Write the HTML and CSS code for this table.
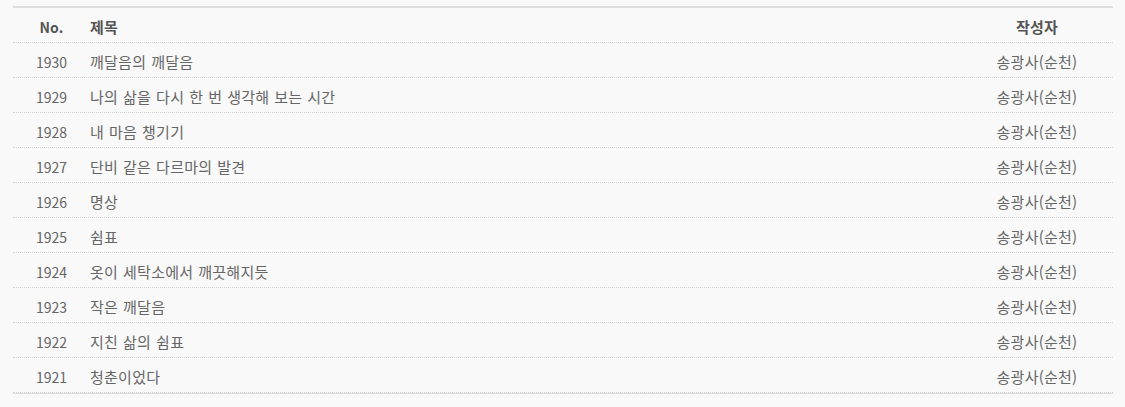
FILE: index.html
```html
<!DOCTYPE html>
<html lang="ko">
<head>
<meta charset="utf-8">
<link rel="stylesheet" href="styles.css">
</head>
<body>
<div class="board">
  <div class="row head">
    <div class="no">No.</div>
    <div class="title">제목</div>
    <div class="author">작성자</div>
  </div>
  <div class="row"><div class="no">1930</div><div class="title">깨달음의 깨달음</div><div class="author">송광사(순천)</div></div>
  <div class="row"><div class="no">1929</div><div class="title">나의 삶을 다시 한 번 생각해 보는 시간</div><div class="author">송광사(순천)</div></div>
  <div class="row"><div class="no">1928</div><div class="title">내 마음 챙기기</div><div class="author">송광사(순천)</div></div>
  <div class="row"><div class="no">1927</div><div class="title">단비 같은 다르마의 발견</div><div class="author">송광사(순천)</div></div>
  <div class="row"><div class="no">1926</div><div class="title">명상</div><div class="author">송광사(순천)</div></div>
  <div class="row"><div class="no">1925</div><div class="title">쉼표</div><div class="author">송광사(순천)</div></div>
  <div class="row"><div class="no">1924</div><div class="title">옷이 세탁소에서 깨끗해지듯</div><div class="author">송광사(순천)</div></div>
  <div class="row"><div class="no">1923</div><div class="title">작은 깨달음</div><div class="author">송광사(순천)</div></div>
  <div class="row"><div class="no">1922</div><div class="title">지친 삶의 쉼표</div><div class="author">송광사(순천)</div></div>
  <div class="row"><div class="no">1921</div><div class="title">청춘이었다</div><div class="author">송광사(순천)</div></div>
</div>
</body>
</html>
```
FILE: styles.css
```css
html, body {
  margin: 0;
  padding: 0;
  background: #f9f9f9;
}
body {
  padding: 6px 12px 0 13px;
  font-family: "Noto Sans CJK KR", "Liberation Sans", sans-serif;
  font-size: 15px;
  letter-spacing: 0.25px;
  word-spacing: 0.5px;
  color: #666;
}
.board {
  border-top: 2px solid #dddddd;
  border-bottom: 1px solid #dddddd;
}
.row {
  display: grid;
  grid-template-columns: 77px 1fr 152px;
  height: 35px;
  align-items: center;
  border-bottom: 1px dotted #d4d4d4;
  box-sizing: border-box;
}
.row > div {
  line-height: 20px;
  padding-top: 3px;
}
.row.head {
  font-weight: bold;
  color: #555;
}
.no {
  text-align: center;
  font-size: 14px;
  letter-spacing: 0;
}
.title {
  padding-left: 0;
}
.author {
  text-align: center;
}
```
